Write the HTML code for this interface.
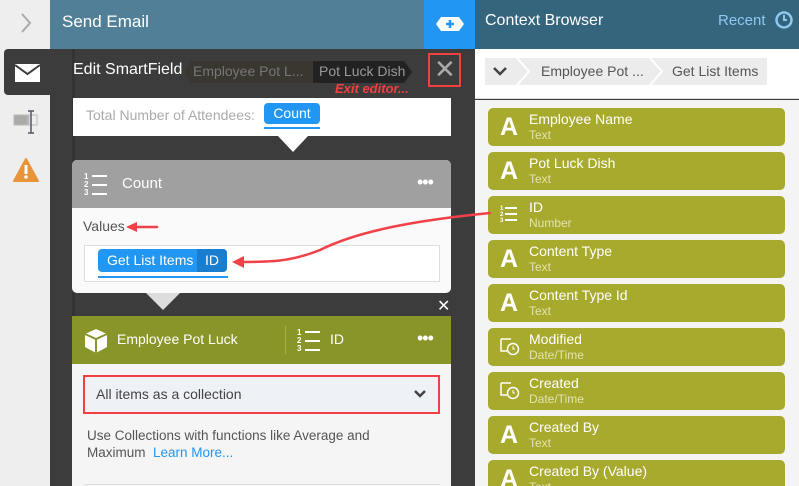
<!DOCTYPE html>
<html style="width:799px;height:486px;overflow:hidden"><head><style>
*{margin:0;padding:0;box-sizing:border-box}
body{width:799px;height:486px;overflow:hidden;position:relative;font-family:"Liberation Sans",sans-serif;background:#3c3c3c}
.a{position:absolute}
.item{position:absolute;left:13px;width:297px;height:38px;background:#a8aa2e;border-radius:5px;color:#fff}
.item .t{position:absolute;left:41px;top:3px;font-size:14px}
.item .s{position:absolute;left:41px;top:20px;font-size:12px;color:#e2e4b0}
.item .A{position:absolute;left:12px;top:6px;font-size:25px;font-weight:bold;line-height:26px}
</style></head><body>
<div class="a" style="left:0;top:0;width:50px;height:486px;background:#eeeeee"></div>
<svg class="a" style="left:20px;top:12px" width="12" height="22"><path d="M2 2L10 11L2 20" stroke="#aaa" stroke-width="2" fill="none"/></svg>
<div class="a" style="left:4px;top:49px;width:46px;height:46px;background:#3c3c3c;border-radius:4px 0 0 4px"></div>
<svg class="a" style="left:14px;top:63px" width="27" height="20"><rect x="1" y="1" width="25" height="18" fill="#fff"/><path d="M1 2 L13.5 11 L26 2" stroke="#3c3c3c" stroke-width="2" fill="none"/></svg>
<svg class="a" style="left:13px;top:109px" width="28" height="26"><rect x="1" y="6" width="14" height="10" fill="#aaa" stroke="#bbb"/><rect x="16" y="6" width="8" height="10" fill="none" stroke="#bbb"/><path d="M18 2v22M15 2h6M15 24h6" stroke="#556" stroke-width="1.5"/></svg>
<svg class="a" style="left:13px;top:158px" width="26" height="24"><path d="M13 1 L25 23 H1 Z" fill="#e8953a" stroke="#e8953a" stroke-linejoin="round" stroke-width="2"/><rect x="11.5" y="7" width="3" height="9" fill="#fff"/><circle cx="13" cy="19" r="1.7" fill="#fff"/></svg>
<div class="a" style="left:50px;top:0;width:374px;height:49px;background:#527f98"></div>
<div class="a" style="left:62px;top:12px;font-size:17px;color:#fff">Send Email</div>
<div class="a" style="left:424px;top:0;width:51px;height:49px;background:#2196f3"></div>
<svg class="a" style="left:435px;top:14px" width="30" height="20"><path d="M6 3H24L29 10L24 17H6L1 10Z" fill="#fff"/><path d="M15 6v8M11 10h8" stroke="#2196f3" stroke-width="2.5"/></svg>
<div class="a" style="left:72px;top:49px;width:3px;height:437px;background:#333"></div>
<div class="a" style="left:73px;top:61px;font-size:16px;color:#fff">Edit SmartField</div>
<div class="a" style="left:185px;top:61px;width:128px;height:22px;background:#3a3630;color:#777;font-size:14px;padding:2px 8px;clip-path:polygon(6px 0,100% 0,100% 100%,6px 100%,0 50%)">Employee Pot L...</div>
<div class="a" style="left:313px;top:61px;width:99px;height:22px;background:#222;color:#999;font-size:14px;padding:2px 6px;clip-path:polygon(0 0,92% 0,100% 50%,92% 100%,0 100%)">Pot Luck Dish</div>
<div class="a" style="left:428px;top:53px;width:33px;height:34px;border:2px solid #f04040"></div>
<div class="a" style="left:434px;top:54px;font-size:26px;color:#aaa;line-height:30px">&#10005;</div>
<div class="a" style="left:335px;top:81px;font-size:13px;color:#f04040;font-weight:bold;font-style:italic">Exit editor...</div>
<div class="a" style="left:73px;top:98px;width:378px;height:38px;background:#fff"></div>
<div class="a" style="left:86px;top:107px;font-size:14px;color:#aaa">Total Number of Attendees:</div>
<div class="a" style="left:264px;top:103px;width:56px;height:21px;background:#2196f3;border-radius:4px;color:#fff;font-size:14px;text-align:center;line-height:21px">Count</div>
<div class="a" style="left:264px;top:127px;width:56px;height:2px;background:#2196f3"></div>
<div class="a" style="left:278px;top:136px;width:0;height:0;border-left:15px solid transparent;border-right:15px solid transparent;border-top:16px solid #fff"></div>
<div class="a" style="left:72px;top:160px;width:379px;height:133px;background:#fafafa;border-radius:5px;overflow:hidden">
 <div style="height:48px;background:#a0a0a0"></div></div>
<svg class="a" style="left:84px;top:172px" width="28" height="25" fill="#fff" font-size="8" font-family="Liberation Sans" font-weight="bold"><text x="0" y="7">1</text><text x="0" y="15">2</text><text x="0" y="23">3</text><rect x="8" y="3" width="15" height="2"/><rect x="8" y="12" width="15" height="2"/><rect x="8" y="21" width="15" height="2"/></svg>
<div class="a" style="left:122px;top:175px;font-size:15px;color:#fff">Count</div>
<div class="a" style="left:417px;top:172px;font-size:18px;color:#fff;letter-spacing:-1px">•••</div>
<div class="a" style="left:83px;top:218px;font-size:14px;color:#555">Values</div>
<div class="a" style="left:84px;top:245px;width:356px;height:37px;background:#fff;border:1px solid #ddd"></div>
<div class="a" style="left:98px;top:249px;width:129px;height:23px;background:#2196f3;border-radius:4px;overflow:hidden;color:#fff;font-size:14px;line-height:23px;padding-left:9px">Get List Items<span style="position:absolute;right:0;top:0;width:30px;height:23px;background:#1a7ed0;text-align:center">ID</span></div>
<div class="a" style="left:98px;top:276px;width:130px;height:2px;background:#2196f3"></div>
<div class="a" style="left:146px;top:293px;width:0;height:0;border-left:17px solid transparent;border-right:17px solid transparent;border-top:17px solid #ddd"></div>
<div class="a" style="left:437px;top:296px;font-size:16px;color:#fff">&#10005;</div>
<div class="a" style="left:72px;top:316px;width:379px;height:170px;background:#f5f5f5;overflow:hidden">
 <div style="height:48px;background:#8a9529"></div></div>
<svg class="a" style="left:84px;top:328px" width="24" height="26"><path d="M12 1L23 6V19L12 25L1 19V6Z" fill="#fff"/><path d="M1 6L12 11L23 6M12 11V25" stroke="#8a9529" stroke-width="2" fill="none"/></svg>
<div class="a" style="left:117px;top:331px;font-size:14px;color:#fff">Employee Pot Luck</div>
<div class="a" style="left:285px;top:326px;width:1px;height:28px;background:#a8b040"></div>
<svg class="a" style="left:297px;top:328px" width="28" height="25" fill="#fff" font-size="8" font-family="Liberation Sans" font-weight="bold"><text x="0" y="7">1</text><text x="0" y="15">2</text><text x="0" y="23">3</text><rect x="8" y="3" width="15" height="2"/><rect x="8" y="12" width="15" height="2"/><rect x="8" y="21" width="15" height="2"/></svg>
<div class="a" style="left:330px;top:331px;font-size:14px;color:#fff">ID</div>
<div class="a" style="left:417px;top:328px;font-size:18px;color:#fff;letter-spacing:-1px">•••</div>
<div class="a" style="left:83px;top:375px;width:357px;height:39px;background:#eef2f6;border:2px solid #f04040"></div>
<div class="a" style="left:96px;top:386px;font-size:14px;color:#444">All items as a collection</div>
<svg class="a" style="left:413px;top:389px" width="14" height="10"><path d="M2 2L7 7L12 2" stroke="#444" stroke-width="2.5" fill="none"/></svg>
<div class="a" style="left:87px;top:427px;font-size:13.5px;color:#555;line-height:17px">Use Collections with functions like Average and<br>Maximum &nbsp;<span style="color:#2196f3">Learn More...</span></div>
<div class="a" style="left:84px;top:484px;width:356px;height:1px;background:#ddd"></div>
<div class="a" style="left:475px;top:0;width:324px;height:49px;background:#34657c"></div>
<div class="a" style="left:485px;top:12px;font-size:16px;color:#fff">Context Browser</div>
<div class="a" style="left:718px;top:12px;font-size:15px;color:#8ec8f0">Recent</div>
<svg class="a" style="left:775px;top:11px" width="18" height="18"><circle cx="9" cy="9" r="7.5" stroke="#8ec8f0" stroke-width="2.5" fill="none"/><path d="M9 4v5h3" stroke="#8ec8f0" stroke-width="2" fill="none"/></svg>
<div class="a" style="left:475px;top:49px;width:324px;height:50px;background:#fff;border-bottom:1px solid #ddd"></div>
<div class="a" style="left:485px;top:58px;width:282px;height:27px;background:#ececec"></div>
<svg class="a" style="left:475px;top:58px" width="300" height="27"><path d="M42 0L54 13.5L42 27M175 0L187 13.5L175 27" stroke="#fff" stroke-width="2" fill="none"/><path d="M294 0L292 0L300 13.5L292 27" fill="#fff"/><path d="M19 10L25 16L31 10" stroke="#444" stroke-width="2.5" fill="none"/></svg>
<div class="a" style="left:541px;top:63px;font-size:14px;color:#555">Employee Pot ...</div>
<div class="a" style="left:672px;top:63px;font-size:14px;color:#555">Get List Items</div>
<div class="a" style="left:475px;top:100px;width:324px;height:386px;background:#f4f4f4;overflow:hidden">
<div class="item" style="top:8px"><div class="A">A</div><div class="t">Employee Name</div><div class="s">Text</div></div>
<div class="item" style="top:52px"><div class="A">A</div><div class="t">Pot Luck Dish</div><div class="s">Text</div></div>
<div class="item" style="top:96px"><svg class="a" style="left:12px;top:8px" width="20" height="20" fill="#fff" font-size="6" font-family="Liberation Sans" font-weight="bold"><text x="0" y="6">1</text><text x="0" y="12">2</text><text x="0" y="18">3</text><rect x="5" y="3" width="12" height="2"/><rect x="5" y="9" width="12" height="2"/><rect x="5" y="15" width="12" height="2"/></svg><div class="t">ID</div><div class="s">Number</div></div>
<div class="item" style="top:140px"><div class="A">A</div><div class="t">Content Type</div><div class="s">Text</div></div>
<div class="item" style="top:184px"><div class="A">A</div><div class="t">Content Type Id</div><div class="s">Text</div></div>
<div class="item" style="top:228px"><svg class="a" style="left:12px;top:8px" width="20" height="20"><path d="M1 3h10M1 3v12h6" stroke="#fff" stroke-width="1.5" fill="none"/><circle cx="13" cy="13" r="5.5" stroke="#fff" stroke-width="1.5" fill="none"/><path d="M13 10v3h2" stroke="#fff" fill="none"/></svg><div class="t">Modified</div><div class="s">Date/Time</div></div>
<div class="item" style="top:272px"><svg class="a" style="left:12px;top:8px" width="20" height="20"><path d="M1 3h10M1 3v12h6" stroke="#fff" stroke-width="1.5" fill="none"/><circle cx="13" cy="13" r="5.5" stroke="#fff" stroke-width="1.5" fill="none"/><path d="M13 10v3h2" stroke="#fff" fill="none"/></svg><div class="t">Created</div><div class="s">Date/Time</div></div>
<div class="item" style="top:316px"><div class="A">A</div><div class="t">Created By</div><div class="s">Text</div></div>
<div class="item" style="top:360px"><div class="A">A</div><div class="t">Created By (Value)</div><div class="s">Text</div></div>
</div>
<svg class="a" style="left:0;top:0" width="799" height="486"><g stroke="#f04048" stroke-width="2.5" fill="none" stroke-linecap="round"><path d="M490 213 C420 220, 360 230, 320 250 C290 262, 270 262, 238 262"/><path d="M130 227H157"/></g><path d="M232 262L244 256L244 268Z" fill="#f04048"/><path d="M126 227L137 222L137 232Z" fill="#f04048"/></svg>
</body></html>
